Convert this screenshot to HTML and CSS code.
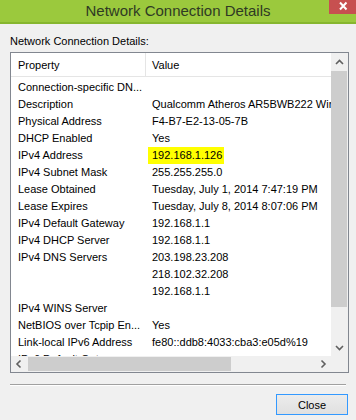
FILE: index.html
```html
<!DOCTYPE html>
<html lang="en">
<head>
  <meta charset="UTF-8" />
  <title>Network Connection Details</title>
  <link rel="stylesheet" href="styles.css">
</head>
<body>
  <div class="window">
    <div class="titlebar">
      <span></span>
      <div class="title">Network Connection Details</div>
      <div class="close-btn">
        <svg width="27" height="14" viewBox="0 0 27 14">
          <path d="M11 2.5 L17.5 9.5 M17.5 2.5 L11 9.5" stroke="#fff" stroke-width="2" fill="none"/>
        </svg>
      </div>
    </div>

    <div class="content">
      <div class="caption">Network Connection Details:</div>

      <div class="listbox">
        <div class="list-main">
          <div class="list-header">
            <div class="col-prop">Property</div>
            <div class="col-val">Value</div>
          </div>
          <div class="list-body">
            <div class="row"><div class="col-prop">Connection-specific DN...</div><div class="col-val"></div></div>
            <div class="row"><div class="col-prop">Description</div><div class="col-val">Qualcomm Atheros AR5BWB222 Wireless Network Adapter</div></div>
            <div class="row"><div class="col-prop">Physical Address</div><div class="col-val">F4-B7-E2-13-05-7B</div></div>
            <div class="row"><div class="col-prop">DHCP Enabled</div><div class="col-val">Yes</div></div>
            <div class="row"><div class="col-prop">IPv4 Address</div><div class="col-val"><span class="mark">192.168.1.126</span></div></div>
            <div class="row"><div class="col-prop">IPv4 Subnet Mask</div><div class="col-val">255.255.255.0</div></div>
            <div class="row"><div class="col-prop">Lease Obtained</div><div class="col-val">Tuesday, July 1, 2014 7:47:19 PM</div></div>
            <div class="row"><div class="col-prop">Lease Expires</div><div class="col-val">Tuesday, July 8, 2014 8:07:06 PM</div></div>
            <div class="row"><div class="col-prop">IPv4 Default Gateway</div><div class="col-val">192.168.1.1</div></div>
            <div class="row"><div class="col-prop">IPv4 DHCP Server</div><div class="col-val">192.168.1.1</div></div>
            <div class="row"><div class="col-prop">IPv4 DNS Servers</div><div class="col-val">203.198.23.208</div></div>
            <div class="row"><div class="col-prop"></div><div class="col-val">218.102.32.208</div></div>
            <div class="row"><div class="col-prop"></div><div class="col-val">192.168.1.1</div></div>
            <div class="row"><div class="col-prop">IPv4 WINS Server</div><div class="col-val"></div></div>
            <div class="row"><div class="col-prop">NetBIOS over Tcpip En...</div><div class="col-val">Yes</div></div>
            <div class="row"><div class="col-prop">Link-local IPv6 Address</div><div class="col-val">fe80::ddb8:4033:cba3:e05d%19</div></div>
            <div class="row"><div class="col-prop">IPv6 Default Gateway</div><div class="col-val"></div></div>
          </div>
        </div>

        <div class="vscroll">
          <div class="sb-arrow">
            <svg width="17" height="17" viewBox="0 0 17 17"><polyline points="5,11 8.5,7.5 12,11" fill="none" stroke="#606060" stroke-width="1.6"/></svg>
          </div>
          <div class="vthumb"></div>
          <div class="sb-track"></div>
          <div class="sb-arrow">
            <svg width="17" height="17" viewBox="0 0 17 17"><polyline points="5,7 8.5,10.5 12,7" fill="none" stroke="#606060" stroke-width="1.6"/></svg>
          </div>
        </div>

        <div class="hscroll">
          <div class="sb-arrow">
            <svg width="17" height="16" viewBox="0 0 17 16"><polyline points="9.5,4.5 6,8 9.5,11.5" fill="none" stroke="#606060" stroke-width="1.6"/></svg>
          </div>
          <div class="hthumb"></div>
          <div class="sb-track"></div>
          <div class="sb-arrow">
            <svg width="17" height="16" viewBox="0 0 17 16"><polyline points="7.5,4.5 11,8 7.5,11.5" fill="none" stroke="#606060" stroke-width="1.6"/></svg>
          </div>
        </div>

        <div class="corner"></div>
      </div>

      <div class="separator"></div>

      <div class="buttons">
        <button class="btn">Close</button>
      </div>
    </div>
  </div>
</body>
</html>
```

FILE: styles.css
```css
body {
  margin: 0;
  font-family: 'Segoe UI', 'Liberation Sans', Arial, sans-serif;
  font-size: 11px;
  color: #000;
  background-color: #f0f0f0;
}

.window {
  width: 356px;
  height: 420px;
  overflow: hidden;
  background-color: #f0f0f0;
}

.titlebar {
  display: grid;
  grid-template-columns: 1fr auto 1fr;
  height: 22px;
  background-color: #9bc93d;
  border-bottom: 2px solid #86b62f;
}

.title {
  font-size: 15px;
  line-height: 22px;
  color: #2f3a24;
  white-space: nowrap;
}

.close-btn {
  justify-self: end;
  width: 27px;
  height: 14px;
  background-color: #c75050;
}

.close-btn svg {
  display: block;
}

.content {
  padding: 11px 7px 0 10px;
}

.caption {
  line-height: 13px;
  height: 13px;
}

.listbox {
  margin-top: 4px;
  width: 339px;
  height: 321px;
  box-sizing: border-box;
  border: 1px solid #828790;
  display: grid;
  grid-template-columns: 320px 17px;
  grid-template-rows: 303px 16px;
  background-color: #fff;
}

.list-main {
  overflow: hidden;
  background-color: #fff;
}

.list-header {
  display: flex;
  height: 24px;
  box-sizing: border-box;
  border-bottom: 1px solid #e5e5e5;
  line-height: 21px;
  padding-top: 2px;
}

.list-header .col-prop {
  border-right: 1px solid #e5e5e5;
  margin-top: -2px;
  padding-top: 2px;
}

.list-body {
  padding-top: 2px;
}

.row {
  display: flex;
  height: 17px;
  line-height: 17px;
}

.col-prop {
  flex: 0 0 135px;
  box-sizing: border-box;
  padding-left: 7px;
  white-space: nowrap;
  overflow: hidden;
}

.col-val {
  flex: 1;
  padding-left: 6px;
  white-space: nowrap;
  overflow: hidden;
}

.mark {
  display: inline-block;
  background-color: #ffff00;
  padding: 0 2px 0 4px;
  margin-left: -4px;
}

.vscroll {
  display: flex;
  flex-direction: column;
  background-color: #f0f0f0;
}

.hscroll {
  display: flex;
  background-color: #f0f0f0;
}

.sb-arrow {
  flex: 0 0 auto;
}

.sb-arrow svg {
  display: block;
}

.sb-track {
  flex: 1;
}

.vthumb {
  height: 236px;
  margin: 1px 1px 0 0;
  background-color: #cdcdcd;
}

.hthumb {
  width: 203px;
  margin: 1px 0;
  background-color: #cdcdcd;
}

.corner {
  background-color: #f0f0f0;
}

.separator {
  margin-top: 11px;
  width: 336px;
  border-top: 1px solid #a0a0a0;
  border-bottom: 1px solid #ffffff;
}

.buttons {
  display: flex;
  justify-content: flex-end;
  margin-top: 8px;
  padding-right: 1px;
}

.btn {
  width: 72px;
  height: 21px;
  box-sizing: border-box;
  border: 1px solid #3399ff;
  background: linear-gradient(#ececec, #e0e0e0);
  font-family: 'Segoe UI', 'Liberation Sans', Arial, sans-serif;
  font-size: 11px;
  color: #000;
  padding: 0;
}
```
